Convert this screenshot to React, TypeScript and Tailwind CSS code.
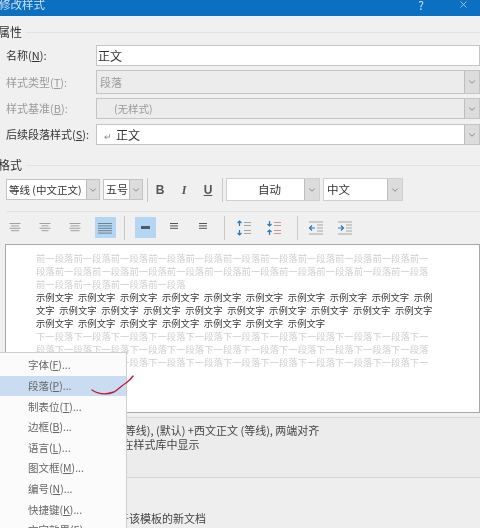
import React from 'react';
import { ChevronDown, X } from 'lucide-react';

const cjk = { fontFamily: '"Noto Sans CJK SC", "Liberation Sans", sans-serif' };

const Hot = ({ text, k, tail = '' }: { text: string; k: string; tail?: string }) => (
  <span>
    {text}(<span className="underline">{k}</span>){tail}
  </span>
);

const Arrow = ({ w = 15 }: { w?: number }) => (
  <div style={{ width: w }} className="shrink-0 h-full bg-[#dcdcdc] border-l border-[#bdbdbd] flex items-center justify-center">
    <ChevronDown size={10} className="text-[#777]" />
  </div>
);

const Section = ({ title }: { title: string }) => (
  <div className="h-4 flex items-center -ml-[2px] text-[12px] text-[#333]">
    <span>{title}</span>
    <div className="flex-1 h-px bg-[#e2e2e2] ml-1" />
  </div>
);

const Row = ({ label, disabled, h, mt, children }: { label: React.ReactNode; disabled?: boolean; h: string; mt: string; children: React.ReactNode }) => (
  <div className={`flex items-center ${h} ${mt}`}>
    <div className={`w-[96px] pl-[6px] text-[11px] whitespace-nowrap ${disabled ? 'text-[#9a9a9a]' : 'text-[#333]'}`}>{label}</div>
    <div className={`flex-1 h-full flex items-center border border-[#c4c4c4] ${disabled ? 'bg-[#ececec]' : 'bg-white'}`}>{children}</div>
  </div>
);

const Lines = ({ widths, color = '#a0a0a0' }: { widths: number[]; color?: string }) => (
  <svg width="16" height="16" viewBox="0 0 16 16">
    {widths.map((w, i) => (
      <rect key={i} x={(16 - w) / 2} y={3 + i * 2.4} width={w} height="1" fill={color} />
    ))}
  </svg>
);

const Cell = ({ w, active, children }: { w: string; active?: boolean; children: React.ReactNode }) => (
  <div className={`${w} flex justify-center shrink-0`}>
    <div className={`w-[21px] h-[21px] flex items-center justify-center ${active ? 'bg-[#b5d6f2]' : ''}`}>{children}</div>
  </div>
);

const Sep = () => <div className="w-px h-[24px] bg-[#c9c9c9] shrink-0" />;

const Spacing = ({ mode }: { mode: 'more' | 'less' }) => (
  <svg width="16" height="16" viewBox="0 0 16 16" fill="none">
    {mode === 'more' ? (
      <path d="M3.5 1v5M1.5 3l2-2 2 2M3.5 15v-5M1.5 13l2 2 2-2" stroke="#2a78b8" strokeWidth="1.2" />
    ) : (
      <path d="M3.5 1v5M1.5 4l2 2 2-2M3.5 15v-5M1.5 12l2-2 2 2" stroke="#2a78b8" strokeWidth="1.2" />
    )}
    <path d="M8 2.5h7M8 5.5h7M8 10.5h7M8 13.5h7" stroke={mode === 'more' ? '#a5a5a5' : '#c29a94'} />
  </svg>
);

const Indent = ({ dir }: { dir: 'in' | 'out' }) => (
  <svg width="16" height="16" viewBox="0 0 16 16" fill="none">
    <path d="M1 2h14M9 5h6M9 8h6M9 11h6M1 14h14" stroke="#a5a5a5" />
    {dir === 'out' ? (
      <path d="M7 8H1.5M4 5.5 1.5 8 4 10.5" stroke="#2a78b8" strokeWidth="1.2" />
    ) : (
      <path d="M1 8h5.5M4 5.5 6.5 8 4 10.5" stroke="#2a78b8" strokeWidth="1.2" />
    )}
  </svg>
);

const prev = '前一段落';
const next = '下一段落';
const sample = '示例文字';

const previewLines: { text: string; dark?: boolean }[] = [
  { text: prev.repeat(10) + '前一' },
  { text: '段落' + prev.repeat(10) },
  { text: prev.repeat(4) },
  { text: Array(9).fill(sample).join(' ') + ' 示例', dark: true },
  { text: '文字 ' + Array(9).fill(sample).join(' '), dark: true },
  { text: Array(7).fill(sample).join(' '), dark: true },
  { text: next.repeat(10) + '下一' },
  { text: '段落' + next.repeat(10) },
  { text: next.repeat(10) + '下一' },
];

const menuItems: { text: string; k: string }[] = [
  { text: '字体', k: 'F' },
  { text: '段落', k: 'P' },
  { text: '制表位', k: 'T' },
  { text: '边框', k: 'B' },
  { text: '语言', k: 'L' },
  { text: '图文框', k: 'M' },
  { text: '编号', k: 'N' },
  { text: '快捷键', k: 'K' },
  { text: '文字效果', k: 'E' },
];

export default function App() {
  return (
    <div style={cjk} className="relative w-[480px] h-[528px] overflow-hidden bg-[#f0f0f0] blur-[0.4px]">
      <div className="h-4 bg-[#0b6fc2] flex items-start text-[#cfe3f5] text-[11.5px] leading-[9px] overflow-hidden">
        <span className="-ml-[1px]">修改样式</span>
        <span className="ml-auto mr-[34px] text-[12px]">?</span>
        <X size={11} strokeWidth={1.5} className="mr-[11px] -mt-[1px]" />
      </div>

      <div className="mt-2">
        <Section title="属性" />
      </div>
      <Row label={<Hot text="名称" k="N" tail=":" />} h="h-[21px]" mt="mt-[5px]">
        <span className="pl-[1px] text-[12px] text-[#333]">正文</span>
      </Row>
      <Row label={<Hot text="样式类型" k="T" tail=":" />} disabled h="h-[24px]" mt="mt-1">
        <span className="flex-1 pl-[3px] text-[11px] text-[#999]">段落</span>
        <Arrow />
      </Row>
      <Row label={<Hot text="样式基准" k="B" tail=":" />} disabled h="h-[21px]" mt="mt-1">
        <span className="flex-1 pl-[17px] text-[10.5px] text-[#999]">(无样式)</span>
        <Arrow />
      </Row>
      <Row label={<Hot text="后续段落样式" k="S" tail=":" />} h="h-[21px]" mt="mt-[5px]">
        <span className="flex-1 pl-[7px] text-[12px] text-[#333]">
          <span className="text-[#888] text-[9px] mr-1">↵</span>正文
        </span>
        <Arrow />
      </Row>

      <div className="mt-3">
        <Section title="格式" />
      </div>

      <div className="flex items-center h-[23px] mt-[5px] pl-[6px] text-[11.5px] text-[#333]">
        <div className="w-[94px] h-[21px] flex items-center bg-white border border-[#c4c4c4] whitespace-nowrap overflow-hidden">
          <span className="flex-1 pl-[2px] text-[10.5px]">等线 (中文正文)</span>
          <Arrow w={13} />
        </div>
        <div className="w-10 h-[21px] ml-[3px] flex items-center bg-white border border-[#c4c4c4]">
          <span className="flex-1 pl-[2px] text-[11px] whitespace-nowrap">五号</span>
          <Arrow w={13} />
        </div>
        <div className="w-px h-[24px] bg-[#c9c9c9] ml-1" />
        <div className="flex text-[12px] font-bold text-[#555]">
          <span className="w-6 text-center" style={{ fontFamily: '"Liberation Sans", sans-serif' }}>B</span>
          <span className="w-6 text-center italic" style={{ fontFamily: '"Liberation Serif", serif' }}>I</span>
          <span className="w-6 text-center underline" style={{ fontFamily: '"Liberation Sans", sans-serif' }}>U</span>
        </div>
        <div className="w-px h-[24px] bg-[#c9c9c9] ml-[2px]" />
        <div className="w-[94px] h-[23px] ml-[3px] flex items-center bg-white border border-[#d0d0d0]">
          <span className="flex-1 text-center text-[11.5px] pl-[8px]">自动</span>
          <Arrow />
        </div>
        <div className="w-[80px] h-[23px] ml-[3px] flex items-center bg-white border border-[#d0d0d0]">
          <span className="flex-1 pl-[3px] text-[11.5px]">中文</span>
          <Arrow />
        </div>
      </div>

      <div className="h-px bg-[#e4e4e4] mt-[10px] ml-[6px]" />

      <div className="flex items-center h-[21px] mt-[5px]">
        <Cell w="w-[30px]"><Lines widths={[11, 8, 11, 8]} /></Cell>
        <Cell w="w-[30px]"><Lines widths={[11, 7, 11, 7]} /></Cell>
        <Cell w="w-[30px]"><Lines widths={[11, 9, 11, 9]} /></Cell>
        <Cell w="w-[30px]" active><Lines widths={[14, 14, 14, 14, 14]} color="#6f7f8d" /></Cell>
        <div className="w-1 shrink-0" />
        <Sep />
        <div className="w-[5px] shrink-0" />
        <Cell w="w-[30px]" active>
          <div className="w-[9px] h-[3px] bg-[#4a5a68]" />
        </Cell>
        <Cell w="w-[28px]"><Lines widths={[8, 8, 8]} color="#555" /></Cell>
        <Cell w="w-[30px]"><Lines widths={[8, 8, 8]} color="#555" /></Cell>
        <div className="w-[6px] shrink-0" />
        <Sep />
        <div className="w-1 shrink-0" />
        <Cell w="w-[30px]"><Spacing mode="more" /></Cell>
        <Cell w="w-[30px]"><Spacing mode="less" /></Cell>
        <div className="w-[8px] shrink-0" />
        <Sep />
        <div className="w-[3px] shrink-0" />
        <Cell w="w-[30px]"><Indent dir="out" /></Cell>
        <Cell w="w-[28px]"><Indent dir="in" /></Cell>
      </div>

      <div className="h-[169px] mt-[6px] ml-[5px] bg-white border border-[#a8a8a8] pl-[30px] pt-[7px] overflow-hidden">
        {previewLines.map((line, i) => (
          <div
            key={i}
            className={`h-[13px] leading-[13px] text-[9.35px] whitespace-pre [word-spacing:2.5px] ${line.dark ? 'text-[#3a3a3a]' : 'text-[#cfcfcf]'}`}
          >
            {line.text}
          </div>
        ))}
      </div>

      <div className="h-[61px] mt-1 ml-[5px] bg-[#ececec] border-y border-[#d6d6d6] pl-[4px] pt-[5px] text-[11px] leading-[14px] text-[#444] whitespace-nowrap overflow-hidden">
        <div>字体: (中文) +中文正文 (等线), (默认) +西文正文 (等线), 两端对齐</div>
        <div className="pl-[86px]">样式: 在样式库中显示</div>
      </div>

      <div className="h-[50px] bg-[#eeeeee] pt-[32px] pl-[107px] text-[11px] text-[#444] whitespace-nowrap">
        基于该模板的新文档
      </div>

      <div className="absolute left-0 top-[352px] bottom-0 w-[127px] bg-[#fbfbfb] border-t border-r border-[#cfcfcf] pt-[2px] text-[10.5px] text-[#666]">
        {menuItems.map((item, i) => (
          <div
            key={item.text}
            className={`h-[20.6px] flex items-center pl-[28px] whitespace-nowrap ${i === 1 ? 'bg-[#c9dcf1]' : ''}`}
          >
            <Hot text={item.text} k={item.k} tail="..." />
          </div>
        ))}
      </div>

      <svg className="absolute left-[88px] top-[372px]" width="50" height="26" viewBox="0 0 50 26" fill="none">
        <path d="M4 18 C10 22 18 23 26 20 C31 17 33 14 38 11 C41 9 43 7 45 4" stroke="#c2183a" strokeWidth="1.4" strokeLinecap="round" />
      </svg>
    </div>
  );
}
